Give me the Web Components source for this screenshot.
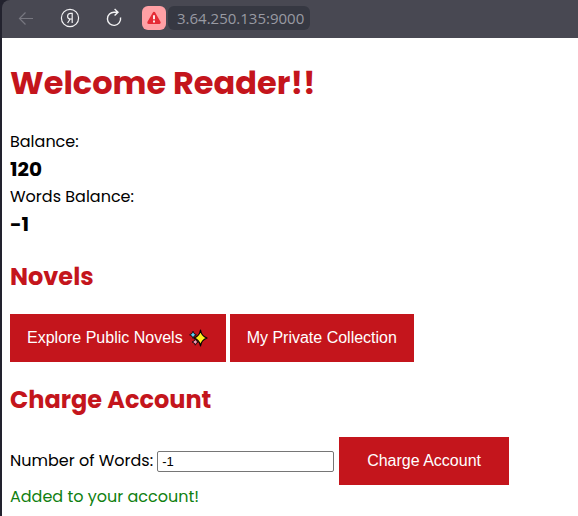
<!DOCTYPE html>
<html lang="en">
<head>
<meta charset="utf-8">
<meta name="viewport" content="width=device-width, initial-scale=1">
<title>Novels</title>
<style>
  html { background: #22222e; }
  body { margin: 0; min-height: 100vh; display: flex; --accent: #c4151c; }
  app-window { flex: 1; }
</style>
</head>
<body>
<app-window>
  <browser-bar slot="bar" address="3.64.250.135:9000"></browser-bar>
  <reader-page></reader-page>
</app-window>
<script>
  function define(name, render) {
    customElements.define(name, class extends HTMLElement {
      constructor() {
        super();
        this.attachShadow({ mode: 'open' });
      }
      connectedCallback() {
        this.shadowRoot.innerHTML = render(this);
      }
    });
  }

  define('app-window', () => `
    <style>
      :host { display: flex; flex-direction: column; margin-left: 2px; background: #22222e; }
      main { flex: 1; background: #fff; }
    </style>
    <slot name="bar"></slot>
    <main><slot></slot></main>`);

  define('browser-bar', el => `
    <style>
      :host { display: flex; align-items: center; height: 38px; box-sizing: border-box; padding: 0 12px 2px; background: #484852; border-top-left-radius: 8px; }
      nav { display: flex; gap: 20px; margin-right: 16px; }
      button { display: flex; align-items: center; justify-content: center; padding: 0; border: 0; background: none; width: 24px; height: 24px; }
      svg { display: block; }
      .warning { background: #ffa0a5; border-radius: 6px; margin-right: 2px; }
      input { box-sizing: border-box; width: 142px; height: 24px; padding: 0 0 0 9px; border: 0; border-radius: 6px; background: #363842; color: #999aa2; font: 15px "Open Sans", sans-serif; }
    </style>
    <nav>
      <button aria-label="Back" disabled><svg width="20" height="20" viewBox="0 0 20 20" fill="none" stroke="#777780" stroke-width="1.2"><path d="M17 10.500H3.500M9.500 4.500l-6 6 6 6"/></svg></button>
      <button aria-label="Home"><svg width="20" height="20" viewBox="0 0 20 20" fill="none" stroke="#f2f2f4"><circle cx="10" cy="10" r="8.600" stroke-width="1.2"/><path stroke-width="1.2" d="M12.200 15V5.400h-1.600c-2 0-3 1.100-3 2.800s1 2.800 3 2.800h1.600M10.200 11l-2.600 4"/></svg></button>
      <button aria-label="Reload"><svg width="20" height="20" viewBox="0 0 20 20" fill="none" stroke="#f2f2f4" stroke-width="1.4"><path d="M16.500 9.500A6.600 6.600 0 1 1 10.500 4.200h3.300M10.600 1l3.400 3.200-3.400 3.300"/></svg></button>
    </nav>
    <button class="warning" aria-label="Not secure"><svg width="16" height="16" viewBox="0 0 16 16"><path fill="#e52b36" stroke="#e52b36" stroke-width="3" stroke-linejoin="round" d="M8 3.400 13.200 12.400H2.800z"/><path stroke="#fff" stroke-width="1.800" d="M8 5.200v4M8 10.600v1.800"/></svg></button>
    <input type="text" aria-label="Address" value="${el.getAttribute('address')}">`);

  define('action-button', () => `
    <style>
      :host { display: inline-flex; }
      button { display: flex; align-items: center; gap: 6px; height: 48px; padding: 0 var(--pad, 17px); border: 0; background: var(--accent); color: #fff; font: 16px "Liberation Sans", Arial, sans-serif; white-space: nowrap; cursor: pointer; }
    </style>
    <button type="button"><slot></slot></button>`);

  define('sparkle-icon', () => `
    <style>:host { display: block; } svg { display: block; }</style>
    <svg width="20" height="20" viewBox="0 0 20 20" stroke="#000" stroke-linejoin="round" aria-hidden="true">
      <path fill="#ffed20" stroke-width="1.2" d="M11.500 2q.8 6 6.500 8-5.700 2-6.500 8-.8-6-6.500-8 5.700-2 6.500-8z"/>
      <path fill="#5bd2f5" stroke-width=".8" d="M4 3.200q.5 2.900 3.400 3.600-2.900.7-3.400 3.600-.5-2.900-3.400-3.600 2.900-.7 3.400-3.600z"/>
      <path fill="#f59bb7" stroke-width=".8" d="M6.300 10.800q.5 2.600 3.200 3.200-2.700.6-3.200 3.200-.5-2.600-3.200-3.200 2.700-.6 3.200-3.200z"/>
    </svg>`);

  define('balance-item', el => `
    <style>
      :host { display: block; }
      dl, dd { margin: 0; }
      dt { line-height: 28px; }
      dd { font-size: 20px; font-weight: 700; line-height: 27px; }
    </style>
    <dl><dt>${el.getAttribute('label')}</dt><dd><slot></slot></dd></dl>`);

  define('page-section', el => `
    <style>
      :host { display: block; }
      h2 { margin: 0 0 20px; font-size: 24px; line-height: 35px; color: var(--accent); }
    </style>
    <h2>${el.getAttribute('heading')}</h2>
    <slot></slot>`);

  define('charge-form', () => `
    <style>
      :host { display: block; }
      form { display: flex; align-items: center; flex-wrap: wrap; }
      label { margin-right: 4px; }
      input { box-sizing: border-box; width: 177px; height: 21px; margin-right: 5px; padding: 1px 4px; border: 1px solid #767676; border-radius: 2px; background: #fff; color: #000; font: 13px "Liberation Sans", Arial, sans-serif; }
      action-button { --pad: 28px; }
      output { display: block; line-height: 24px; color: #108010; }
    </style>
    <form>
      <label for="words">Number of Words:</label>
      <input id="words" type="text" value="-1">
      <action-button>Charge Account</action-button>
    </form>
    <output for="words">Added to your account!</output>`);

  define('reader-page', () => `
    <style>
      :host { display: block; padding: 20px 8px 0; color: #000; font: 16px/24px Poppins, Inter, sans-serif; }
      h1 { margin: 0 0 20px; font-size: 32px; line-height: 50px; color: var(--accent); }
      .balances { margin-bottom: 21px; }
      .actions { display: flex; flex-wrap: wrap; gap: 4px; margin-bottom: 20px; }
    </style>
    <h1>Welcome Reader!!</h1>
    <div class="balances">
      <balance-item label="Balance:">120</balance-item>
      <balance-item label="Words Balance:">-1</balance-item>
    </div>
    <page-section heading="Novels">
      <div class="actions">
        <action-button>Explore Public Novels <sparkle-icon></sparkle-icon></action-button>
        <action-button>My Private Collection</action-button>
      </div>
    </page-section>
    <page-section heading="Charge Account">
      <charge-form></charge-form>
    </page-section>`);
</script>
</body>
</html>
